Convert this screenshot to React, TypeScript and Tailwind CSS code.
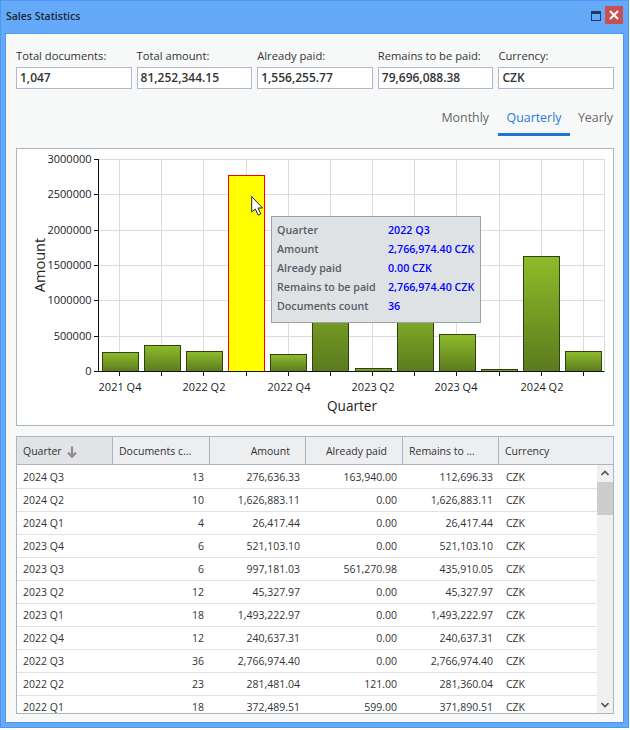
const fields = [
  { label: "Total documents:", value: "1,047" },
  { label: "Total amount:", value: "81,252,344.15" },
  { label: "Already paid:", value: "1,556,255.77" },
  { label: "Remains to be paid:", value: "79,696,088.38" },
  { label: "Currency:", value: "CZK" },
];

const rows = [
  ["2024 Q3", "13", "276,636.33", "163,940.00", "112,696.33"],
  ["2024 Q2", "10", "1,626,883.11", "0.00", "1,626,883.11"],
  ["2024 Q1", "4", "26,417.44", "0.00", "26,417.44"],
  ["2023 Q4", "6", "521,103.10", "0.00", "521,103.10"],
  ["2023 Q3", "6", "997,181.03", "561,270.98", "435,910.05"],
  ["2023 Q2", "12", "45,327.97", "0.00", "45,327.97"],
  ["2023 Q1", "18", "1,493,222.97", "0.00", "1,493,222.97"],
  ["2022 Q4", "12", "240,637.31", "0.00", "240,637.31"],
  ["2022 Q3", "36", "2,766,974.40", "0.00", "2,766,974.40"],
  ["2022 Q2", "23", "281,481.04", "121.00", "281,360.04"],
  ["2022 Q1", "18", "372,489.51", "599.00", "371,890.51"],
];

const tooltip = [
  ["Quarter", "2022 Q3"],
  ["Amount", "2,766,974.40 CZK"],
  ["Already paid", "0.00 CZK"],
  ["Remains to be paid", "2,766,974.40 CZK"],
  ["Documents count", "36"],
];

// chart coordinates are page pixels, the viewBox starts at the chart box corner
const gridX = [119.5, 161.5, 203.5, 246.5, 288.5, 330.5, 372.5, 414.5, 456.5, 499.5, 541.5, 583.5];
const gridY = [
  { y: 159.5, label: "3000000" },
  { y: 194.5, label: "2500000" },
  { y: 230.5, label: "2000000" },
  { y: 265.5, label: "1500000" },
  { y: 300.5, label: "1000000" },
  { y: 336.5, label: "500000" },
  { y: 371.5, label: "0" },
];
const bars = [
  { x: 102.5, top: 352.5 },
  { x: 144.5, top: 345.5 },
  { x: 186.5, top: 351.5 },
  { x: 228.5, top: 175.5, hot: true },
  { x: 270.5, top: 354.5 },
  { x: 312.5, top: 265.5 },
  { x: 355.5, top: 368.5 },
  { x: 397.5, top: 300.5 },
  { x: 439.5, top: 334.5 },
  { x: 481.5, top: 369.5 },
  { x: 523.5, top: 256.5 },
  { x: 565.5, top: 351.5 },
];
const xLabels = [
  { x: 120, label: "2021 Q4" },
  { x: 204, label: "2022 Q2" },
  { x: 289, label: "2022 Q4" },
  { x: 373, label: "2023 Q2" },
  { x: 456, label: "2023 Q4" },
  { x: 542, label: "2024 Q2" },
];

function Chart() {
  return (
    <svg className="block h-full w-full" viewBox="17 149 596 276">
      <defs>
        <linearGradient id="bar" x1="0" y1="0" x2="0" y2="1">
          <stop offset="0" stopColor="#8ebc2a" />
          <stop offset="1" stopColor="#5c7a1e" />
        </linearGradient>
      </defs>
      {gridY.slice(0, 6).map((g) => (
        <line key={g.y} x1={98} x2={604.5} y1={g.y} y2={g.y} stroke="#dcdcdc" />
      ))}
      {gridX.map((x) => (
        <line key={x} x1={x} x2={x} y1={159} y2={371} stroke="#dcdcdc" />
      ))}
      <line x1={604.5} x2={604.5} y1={159} y2={371} stroke="#dcdcdc" />
      {bars.map((b) => (
        <rect
          key={b.x}
          x={b.x}
          y={b.top}
          width={36}
          height={371.5 - b.top}
          fill={b.hot ? "#ffff00" : "url(#bar)"}
          stroke={b.hot ? "#ff0000" : "#2f4210"}
        />
      ))}
      <line x1={98.5} x2={98.5} y1={159} y2={372} stroke="#111" />
      <line x1={94} x2={604.5} y1={371.5} y2={371.5} stroke="#111" />
      {gridY.map((g) => (
        <g key={g.label}>
          <line x1={94} x2={98} y1={g.y} y2={g.y} stroke="#111" />
          <text x={91.5} y={g.y + 3.5} textAnchor="end" fontSize={11} fill="#222">
            {g.label}
          </text>
        </g>
      ))}
      {gridX.map((x) => (
        <line key={x} x1={x} x2={x} y1={372} y2={376} stroke="#111" />
      ))}
      {xLabels.map((l) => (
        <text key={l.x} x={l.x} y={391} textAnchor="middle" fontSize={11} fill="#222">
          {l.label}
        </text>
      ))}
      <text
        x={352}
        y={411}
        textAnchor="middle"
        fontSize={14.5}
        fill="#222"
        textLength={50}
        lengthAdjust="spacingAndGlyphs"
      >
        Quarter
      </text>
      <text
        transform="translate(45 265) rotate(-90)"
        textAnchor="middle"
        fontSize={14.5}
        fill="#222"
      >
        Amount
      </text>
      <path
        d="M251.7 196.5V212l3.6-3 2.9 6.2 2.6-1.2-2.8-6h4.6z"
        fill="#fff"
        stroke="#222"
        strokeWidth={1}
        strokeLinejoin="round"
      />
    </svg>
  );
}

export default function App() {
  return (
    <div className="h-[730px] w-[630px] bg-white font-['Open_Sans',sans-serif] text-[#333]">
      <div className="flex h-[728px] w-[629px] flex-col border border-[#4d97f2] bg-[#65aaf8]">
        <div className="flex h-[32px] shrink-0 items-start justify-between pl-[5px] pr-[5px]">
          <div className="mt-[7px] text-[10.5px] leading-4 font-semibold text-[#1b2735]">
            Sales Statistics
          </div>
          <div className="mt-[5px] flex items-start">
            <div className="mt-[5px] mr-[4px] h-[10px] w-[10px] border border-t-[3px] border-[#1f3a5c]" />
            <div className="flex h-[18px] w-[18px] items-center justify-center bg-[#c75050]">
              <svg width="10" height="10" viewBox="0 0 10 10">
                <path d="M1 1l8 8M9 1l-8 8" stroke="#fff" strokeWidth="2" />
              </svg>
            </div>
          </div>
        </div>
        <div className="mx-[4px] flex h-[690px] flex-col border border-[#4d97f2] bg-[#f7f9f9] pr-[9px] pl-[10px]">
          <div className="mt-[14px] grid grid-cols-5 gap-[5px]">
            {fields.map((f) => (
              <div key={f.label}>
                <div className="h-[19px] text-[11.2px] leading-4 whitespace-nowrap text-[#333]">
                  {f.label}
                </div>
                <div className="h-[22px] border border-[#b4b8cd] bg-white pl-[3px] text-[12px] leading-[20px] font-semibold text-[#333]">
                  {f.value}
                </div>
              </div>
            ))}
          </div>

          <div className="mt-[13px] -mr-[7px] flex h-[34px] justify-end text-[12.4px] text-[#666]">
            <div className="flex items-center px-[9px] pt-[2px] pb-[3px]">Monthly</div>
            <div className="flex w-[72px] items-center justify-center border-b-[3px] border-[#1f74d4] pt-[2px] text-[#2a78d6]">
              Quarterly
            </div>
            <div className="flex w-[51px] items-center justify-center pt-[2px] pb-[3px]">Yearly</div>
          </div>

          <div className="relative mt-[12px] h-[278px] border border-[#aeb6bd] bg-white">
            <Chart />
            <div className="absolute top-[67px] left-[254px] h-[107px] w-[210px] border border-[#9da2a7] bg-[#dfe2e5] pt-[4px] pl-[5px] text-[10.7px] font-semibold">
              {tooltip.map(([k, v]) => (
                <div key={k} className="flex h-[19px] items-center">
                  <div className="w-[111px] text-[#555e63]">{k}</div>
                  <div className="whitespace-nowrap text-[#0000ff]">{v}</div>
                </div>
              ))}
            </div>
          </div>

          <div className="mt-[10px] h-[278px] overflow-hidden border border-[#a9b5c4] bg-white text-[10.5px]">
            <div className="grid h-[28px] grid-cols-[96px_97px_96px_97px_96px_1fr] items-stretch border-b border-[#a9b5c4] bg-[#edeef0] text-[#333]">
              <div className="flex items-center gap-[5px] border-r border-[#a9b5c4] bg-[#e2e3e6] pt-[2px] pl-[6px]">
                Quarter
                <svg width="10" height="12" viewBox="0 0 10 12">
                  <path d="M5 0.5v10M1 6.5l4 4.5 4-4.5" fill="none" stroke="#8f8f8f" strokeWidth="2.2" />
                </svg>
              </div>
              <div className="flex items-center border-r border-[#a9b5c4] pt-[2px] pl-[6px]">Documents c...</div>
              <div className="flex items-center justify-end border-r border-[#a9b5c4] pt-[2px] pr-[15px]">Amount</div>
              <div className="flex items-center justify-end border-r border-[#a9b5c4] pt-[2px] pr-[15px]">Already paid</div>
              <div className="flex items-center border-r border-[#a9b5c4] pt-[2px] pl-[6px]">Remains to ...</div>
              <div className="flex items-center pt-[2px] pl-[6px]">Currency</div>
            </div>
            <div className="flex">
              <div className="w-[580px] shrink-0 pt-[1px]">
                {rows.map((r) => (
                  <div
                    key={r[0]}
                    className="grid h-[23px] grid-cols-[96px_97px_96px_97px_96px_1fr] items-center border-b border-[#e2e2e2] pt-[2px] text-[#333]"
                  >
                    <div className="pl-[6px]">{r[0]}</div>
                    <div className="pr-[6px] text-right">{r[1]}</div>
                    <div className="pr-[6px] text-right">{r[2]}</div>
                    <div className="pr-[6px] text-right">{r[3]}</div>
                    <div className="pr-[6px] text-right">{r[4]}</div>
                    <div className="pl-[7px]">CZK</div>
                  </div>
                ))}
              </div>
              <div className="relative h-[248px] w-[16px] shrink-0 bg-[#f0f0f0]">
                <svg className="absolute top-[5px] left-[4px]" width="8" height="6" viewBox="0 0 8 6">
                  <path d="M0.5 5L4 1.5 7.5 5" fill="none" stroke="#555" strokeWidth="1.6" />
                </svg>
                <div className="absolute top-[17px] left-0 h-[33px] w-[16px] bg-[#cdcdcd]" />
                <svg className="absolute top-[237px] left-[4px]" width="8" height="6" viewBox="0 0 8 6">
                  <path d="M0.5 1L4 4.5 7.5 1" fill="none" stroke="#555" strokeWidth="1.6" />
                </svg>
              </div>
            </div>
          </div>
        </div>
      </div>
    </div>
  );
}
